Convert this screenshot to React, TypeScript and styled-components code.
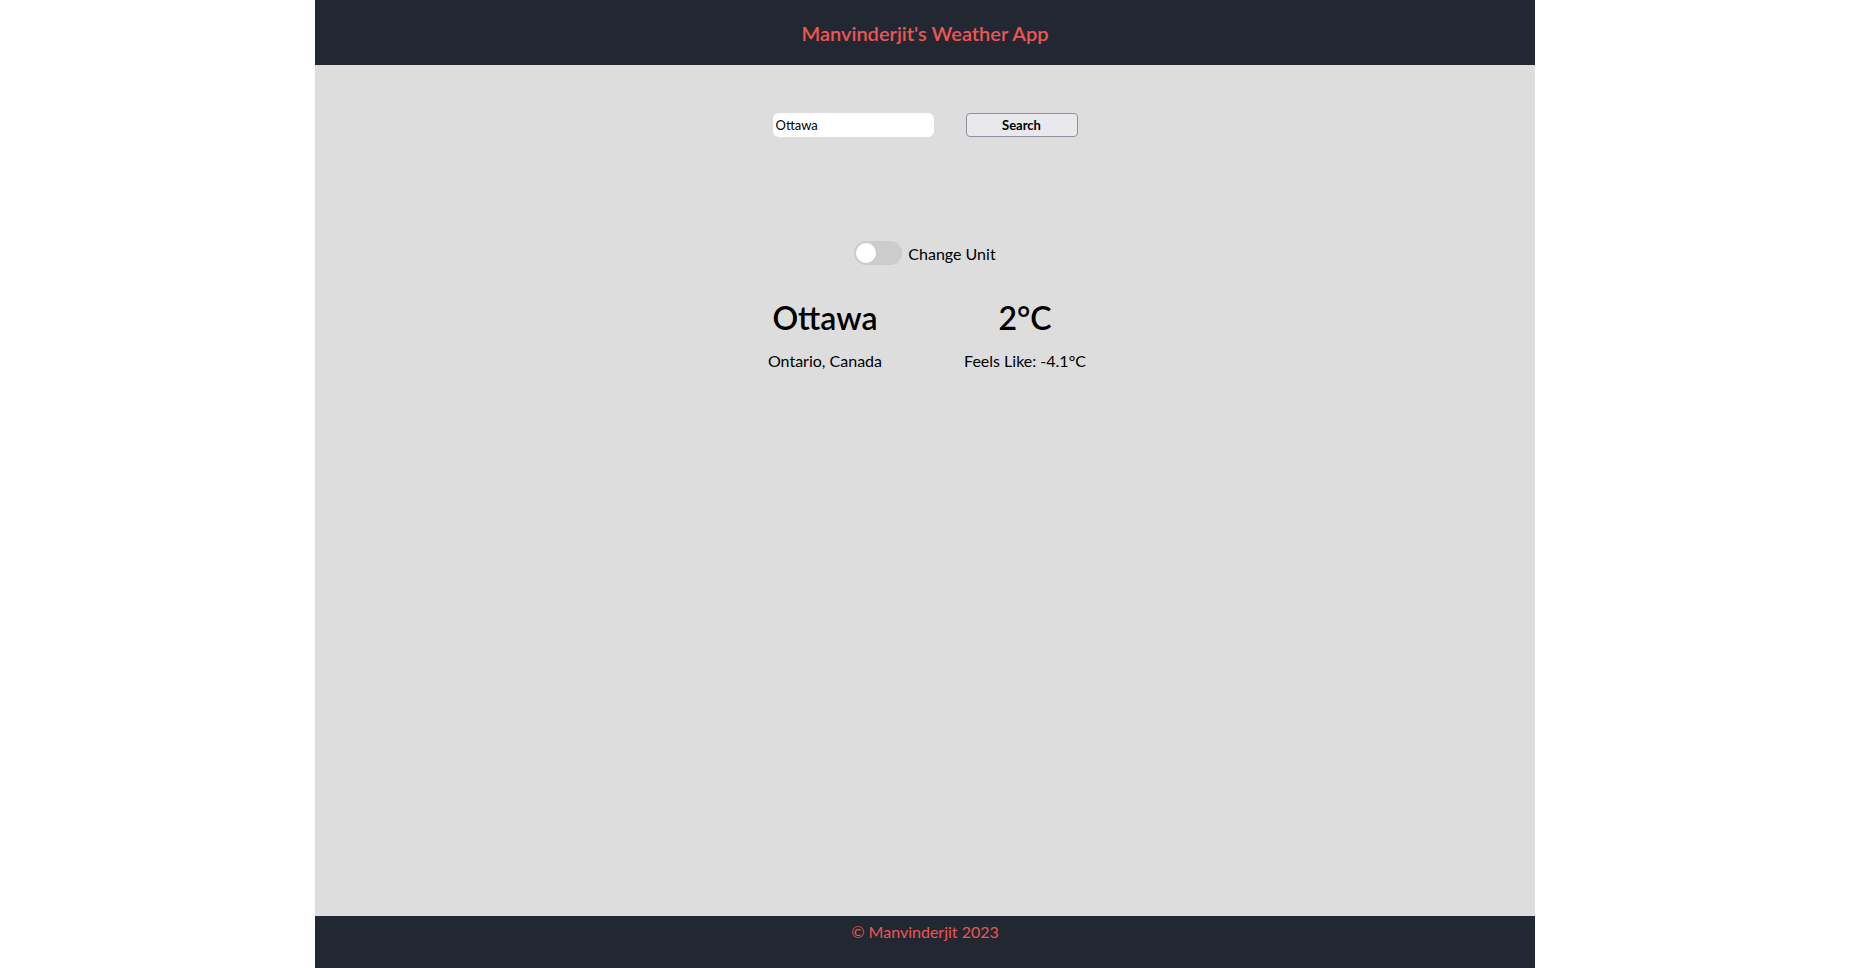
import styled, { createGlobalStyle } from "styled-components";
import { useState } from "react";

const GlobalStyle = createGlobalStyle`
  body {
    margin: 0;
    background-color: #ffffff;
    font-family: Lato, "Open Sans", sans-serif;
  }
`;

const Page = styled.div`
  width: 1220px;
  min-height: 100vh;
  margin: 0 auto;
  display: flex;
  flex-direction: column;
  background-color: #dddddd;
`;

const Header = styled.header`
  height: 65px;
  display: flex;
  justify-content: center;
  align-items: center;
  background-color: #222831;
`;

const Title = styled.h1`
  margin: 0;
  font-size: 20px;
  font-weight: 600;
  color: #f05454;
`;

const Main = styled.main`
  flex: 1;
  display: flex;
  flex-direction: column;
  align-items: center;
  padding-top: 48px;
`;

const SearchRow = styled.form`
  display: flex;
  gap: 32px;
`;

const SearchInput = styled.input`
  width: 161px;
  height: 24px;
  box-sizing: border-box;
  border: none;
  border-radius: 6px;
  padding: 0 3px;
  font-family: inherit;
  font-size: 13px;
  color: #000;
  background: #fff;
  outline: none;
`;

const SearchBtn = styled.button`
  width: 112px;
  height: 24px;
  box-sizing: border-box;
  border: 1px solid #8f8f9d;
  border-radius: 4px;
  background-color: #e9e9ed;
  font-family: inherit;
  font-size: 13px;
  font-weight: 700;
  color: #000;
  cursor: pointer;
`;

const ToggleRow = styled.label`
  margin-top: 104px;
  display: flex;
  align-items: center;
  gap: 6px;
  font-size: 16px;
  color: #000;
  cursor: pointer;
`;

const Track = styled.span<{ $on: boolean }>`
  position: relative;
  width: 48px;
  height: 24px;
  border-radius: 12px;
  background-color: ${(props) => (props.$on ? "#f05454" : "#cccccc")};
`;

const Knob = styled.span<{ $on: boolean }>`
  position: absolute;
  top: 2px;
  left: ${(props) => (props.$on ? "26px" : "2px")};
  width: 20px;
  height: 20px;
  border-radius: 50%;
  background-color: #ffffff;
  transition: left 0.2s;
`;

const Results = styled.div`
  margin-top: 33px;
  display: grid;
  grid-template-columns: 150px 150px;
  gap: 50px;
`;

const Column = styled.div`
  display: flex;
  flex-direction: column;
  align-items: center;
`;

const BigText = styled.h2`
  margin: 0;
  font-size: 32px;
  font-weight: 600;
  color: #000;
`;

const SmallText = styled.p`
  margin: 14px 0 0;
  font-size: 16px;
  color: #000;
  white-space: nowrap;
`;

const Footer = styled.footer`
  height: 52px;
  box-sizing: border-box;
  padding-top: 6px;
  text-align: center;
  background-color: #222831;
  color: #f05454;
  font-size: 16px;
`;

function App() {
  const [city, setCity] = useState("Ottawa");
  const [fahrenheit, setFahrenheit] = useState(false);

  const temp = fahrenheit ? "36°F" : "2°C";
  const feels = fahrenheit ? "24.6°F" : "-4.1°C";

  return (
    <>
      <GlobalStyle />
      <Page>
        <Header>
          <Title>Manvinderjit's Weather App</Title>
        </Header>
        <Main>
          <SearchRow onSubmit={(e) => e.preventDefault()}>
            <SearchInput value={city} onChange={(e) => setCity(e.target.value)} />
            <SearchBtn type="submit">Search</SearchBtn>
          </SearchRow>
          <ToggleRow onClick={() => setFahrenheit(!fahrenheit)}>
            <Track $on={fahrenheit}>
              <Knob $on={fahrenheit} />
            </Track>
            Change Unit
          </ToggleRow>
          <Results>
            <Column>
              <BigText>Ottawa</BigText>
              <SmallText>Ontario, Canada</SmallText>
            </Column>
            <Column>
              <BigText>{temp}</BigText>
              <SmallText>Feels Like: {feels}</SmallText>
            </Column>
          </Results>
        </Main>
        <Footer>© Manvinderjit 2023</Footer>
      </Page>
    </>
  );
}

export default App;
